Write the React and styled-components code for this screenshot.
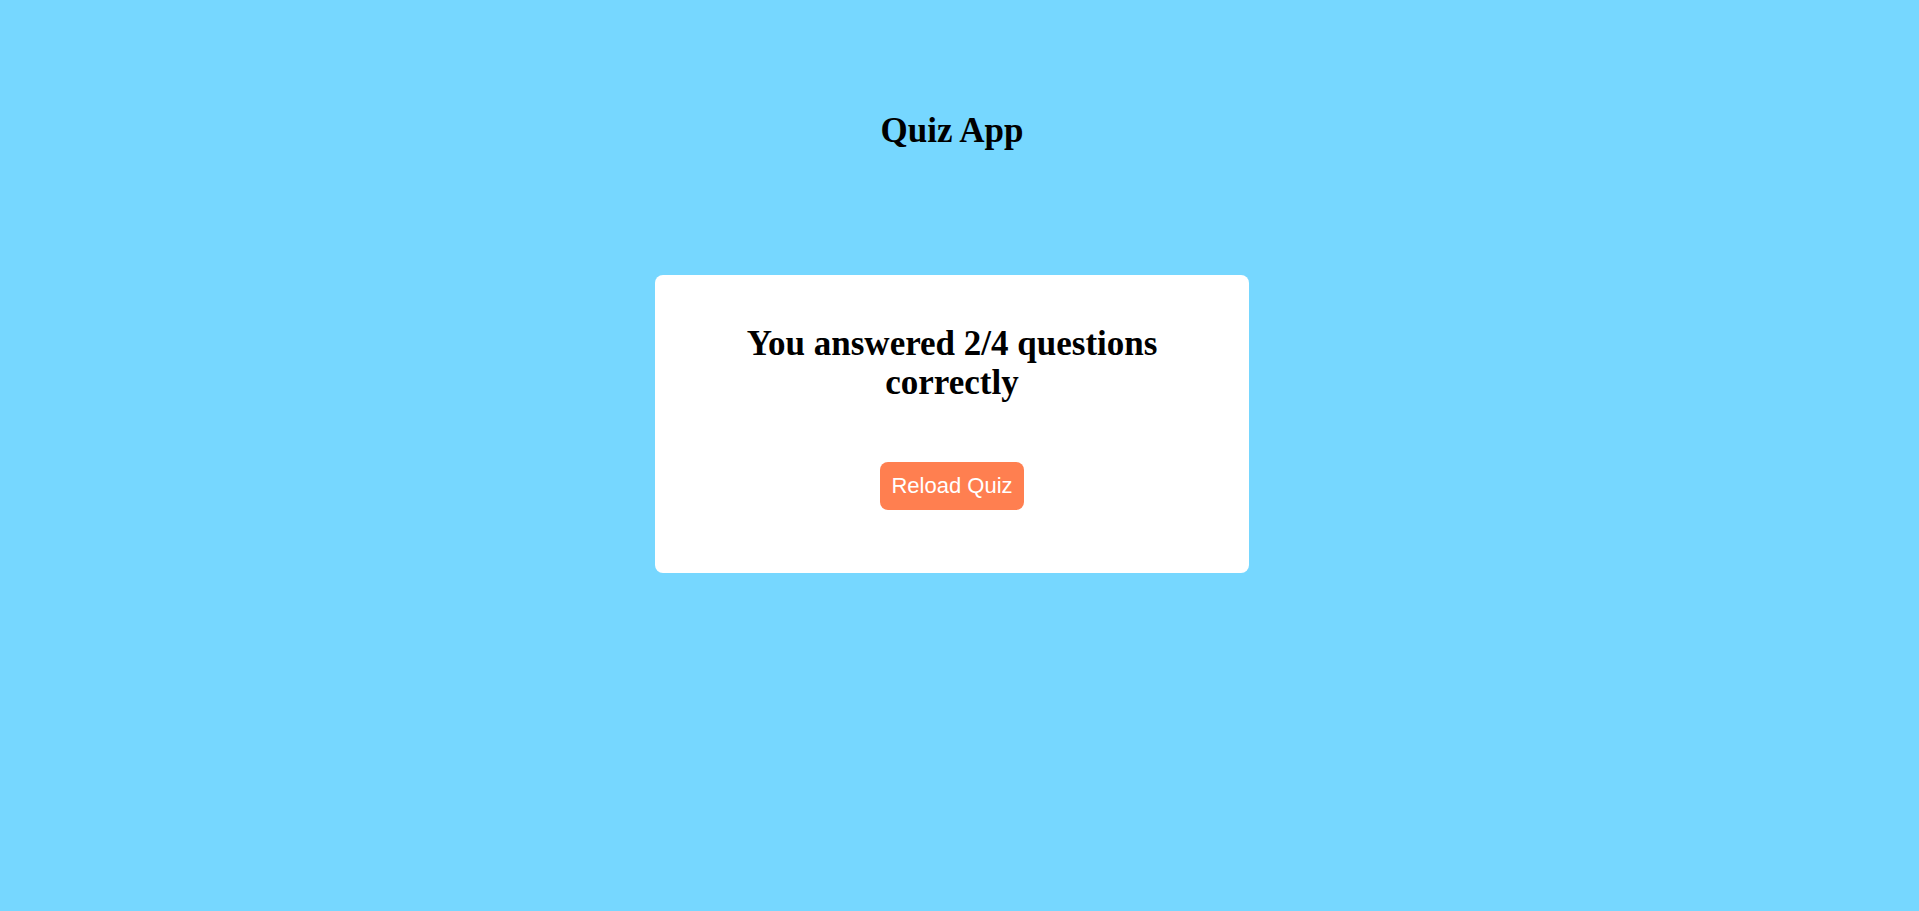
import React, { useState } from 'react';
import styled, { createGlobalStyle } from 'styled-components';

const GlobalStyle = createGlobalStyle`
  html, body {
    margin: 0;
    padding: 0;
    background-color: #76d7ff;
  }
  body {
    font-family: "Liberation Serif", "Times New Roman", serif;
  }
`;

// the reference has a 15px browser scrollbar on the right, so the content
// area is 1904px wide; the extra right padding keeps the same centre line
const Page = styled.div`
  display: flex;
  flex-direction: column;
  align-items: center;
  min-height: 100vh;
  padding: 111px 35px 0 20px;
  background-color: #76d7ff;
`;

const Title = styled.h1`
  margin: 0 0 125px;
  font-size: 35px;
  line-height: 39px;
  font-weight: bold;
  color: #000;
`;

const Card = styled.div`
  width: 594px;
  box-sizing: border-box;
  padding: 49px 40px 63px;
  background-color: #fff;
  border-radius: 8px;
  display: flex;
  flex-direction: column;
  align-items: center;
  text-align: center;
`;

const Result = styled.h2`
  margin: 0 0 60px;
  font-size: 35px;
  line-height: 39px;
  font-weight: bold;
  color: #000;
`;

const ReloadButton = styled.button`
  font-family: "Liberation Sans", Arial, sans-serif;
  font-size: 22px;
  color: #fff;
  background-color: #ff7f50;
  border: none;
  border-radius: 8px;
  padding: 11px 11px;
  cursor: pointer;
`;

const App = () => {
  const [score] = useState(2);
  const total = 4;

  return (
    <>
      <GlobalStyle />
      <Page>
        <Title>Quiz App</Title>
        <Card>
          <Result>{`You answered ${score}/${total} questions correctly`}</Result>
          <ReloadButton>Reload Quiz</ReloadButton>
        </Card>
      </Page>
    </>
  );
};

export default App;
